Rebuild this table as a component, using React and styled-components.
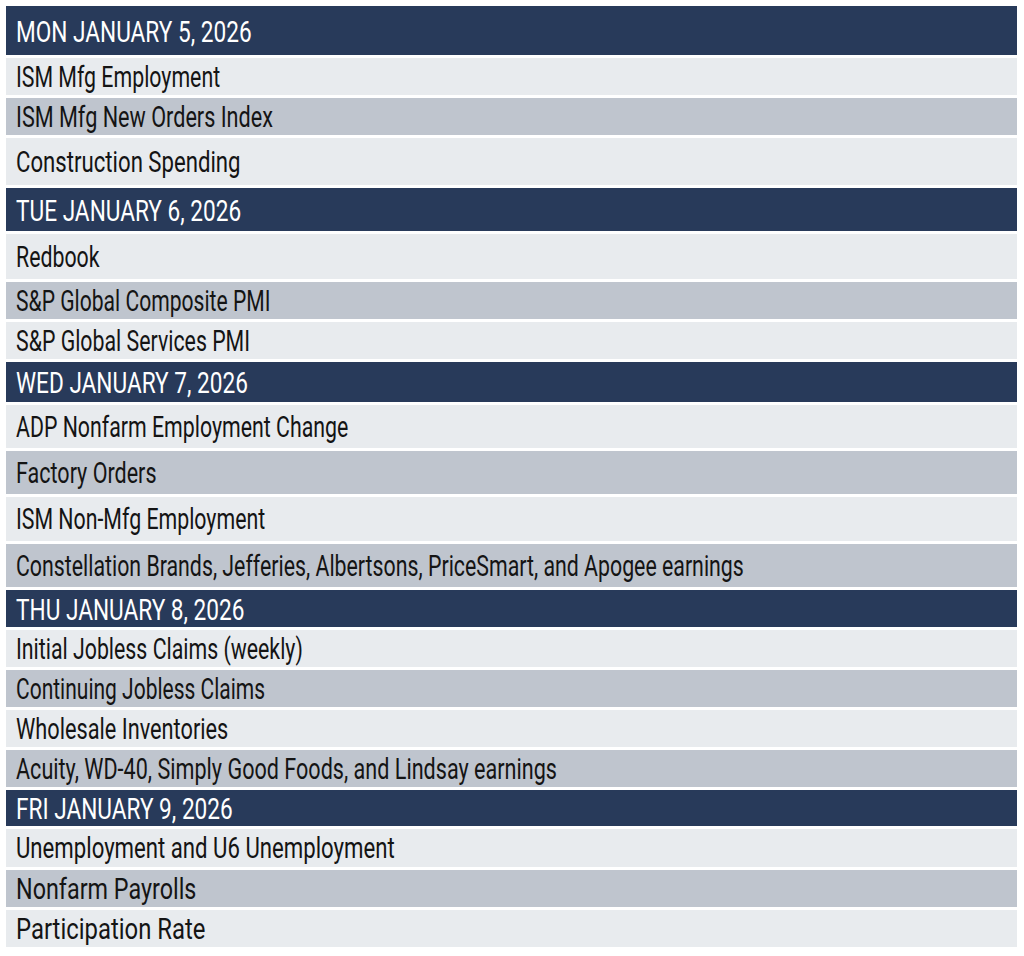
import styled, { createGlobalStyle } from "styled-components";

const GlobalStyle = createGlobalStyle`
  body {
    margin: 0;
    background: #ffffff;
    font-family: Roboto, "Liberation Sans", sans-serif;
  }
`;

const Table = styled.div`
  display: flex;
  flex-direction: column;
  gap: 3px;
  margin: 6px 7px 0 6px;
  width: 1011px;
`;

const Row = styled.div`
  display: flex;
  align-items: center;
  height: ${(p) => p.h}px;
  padding-left: 10px;
  overflow: hidden;
  white-space: nowrap;
  background: ${(p) =>
    p.kind === "head" ? "#283a5a" : p.kind === "dark" ? "#bfc5ce" : "#e8ebee"};
  color: ${(p) => (p.kind === "head" ? "#ffffff" : "#141414")};
`;

// condensed look: no condensed face installed, so squeeze Roboto
const Label = styled.span`
  display: inline-block;
  font-size: 29px;
  line-height: 1;
  transform: scaleX(${(p) => (p.head ? 0.78 : 0.735 * (p.stretch || 1))});
  transform-origin: left center;
  padding-top: ${(p) => (p.head ? 3 : 1)}px;
`;

const rows = [
  ["head", 49, "MON JANUARY 5, 2026"],
  ["light", 37, "ISM Mfg Employment"],
  ["dark", 37, "ISM Mfg New Orders Index", 1.015],
  ["light", 47, "Construction Spending", 1.04],
  ["head", 43, "TUE JANUARY 6, 2026"],
  ["light", 45, "Redbook"],
  ["dark", 37, "S&P Global Composite PMI", 0.99],
  ["light", 37, "S&P Global Services PMI"],
  ["head", 40, "WED JANUARY 7, 2026"],
  ["light", 43, "ADP Nonfarm Employment Change"],
  ["dark", 43, "Factory Orders", 1.01],
  ["light", 44, "ISM Non-Mfg Employment"],
  ["dark", 43, "Constellation Brands, Jefferies, Albertsons, PriceSmart, and Apogee earnings"],
  ["head", 37, "THU JANUARY 8, 2026"],
  ["light", 37, "Initial Jobless Claims (weekly)"],
  ["dark", 37, "Continuing Jobless Claims", 0.985],
  ["light", 37, "Wholesale Inventories", 1.02],
  ["dark", 37, "Acuity, WD-40, Simply Good Foods, and Lindsay earnings", 1.013],
  ["head", 36, "FRI JANUARY 9, 2026"],
  ["light", 38, "Unemployment and U6 Unemployment", 1.04],
  ["dark", 37, "Nonfarm Payrolls", 1.095],
  ["light", 37, "Participation Rate", 1.12],
];

const App = () => {
  return (
    <>
      <GlobalStyle />
      <Table>
        {rows.map(([kind, h, text, stretch], i) => (
          <Row key={i} kind={kind} h={h}>
            <Label head={kind === "head"} stretch={stretch}>
              {text}
            </Label>
          </Row>
        ))}
      </Table>
    </>
  );
};

export default App;
